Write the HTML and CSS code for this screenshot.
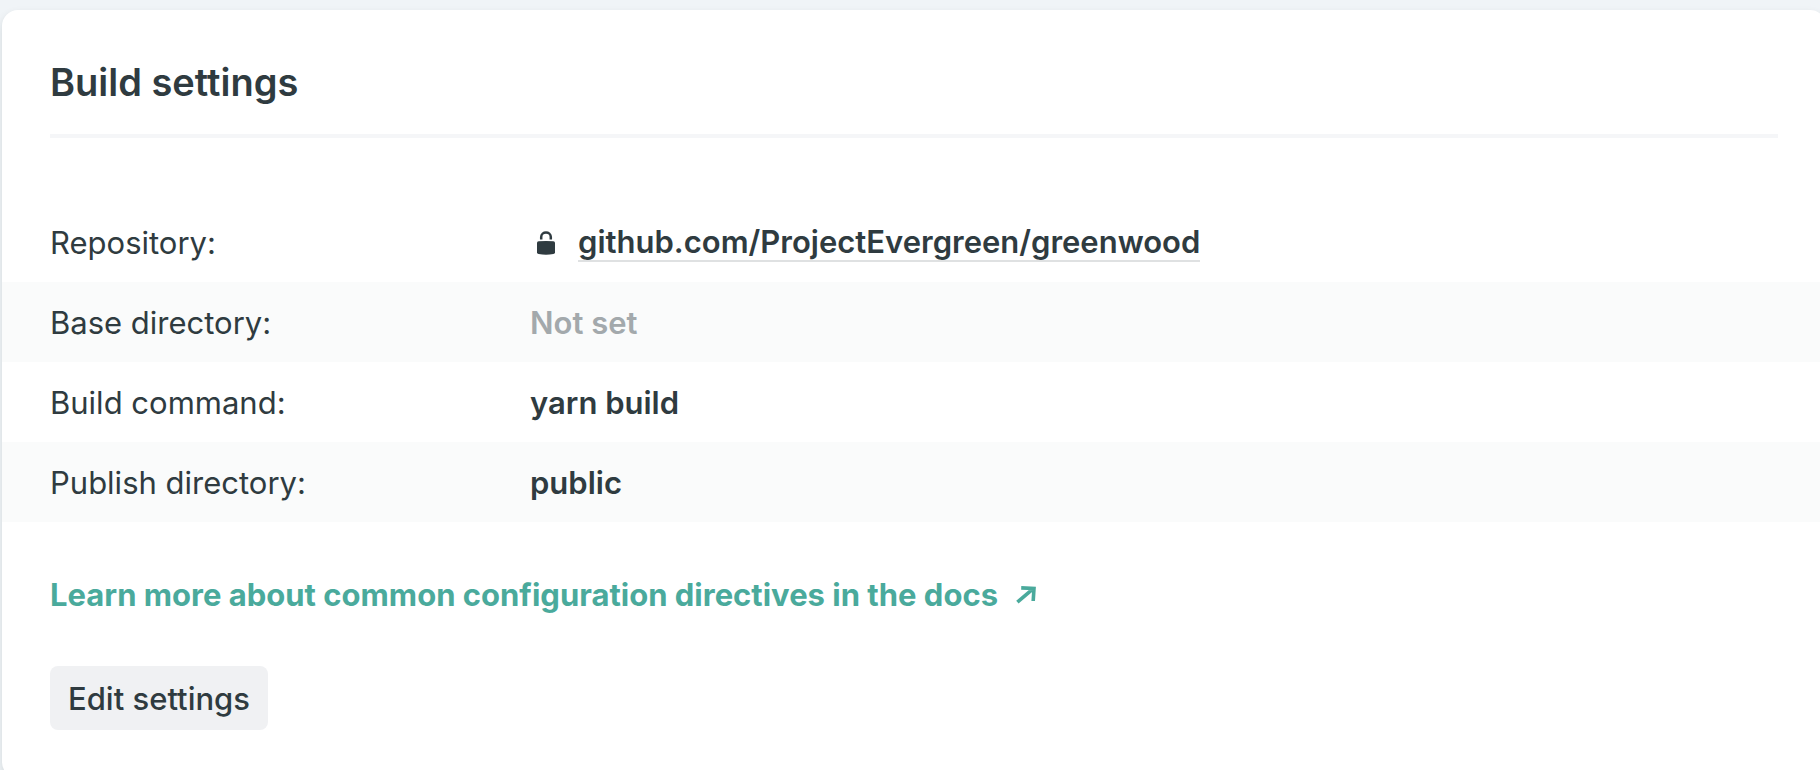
FILE: index.html
```html
<!DOCTYPE html>
<html lang="en">
<head>
<meta charset="utf-8">
<meta name="viewport" content="width=device-width, initial-scale=1">
<title>Build settings</title>
<link rel="stylesheet" href="styles.css">
</head>
<body>
<main class="card">
  <h2 class="card-title">Build settings</h2>
  <dl class="settings">
    <div class="row">
      <dt>Repository:</dt>
      <dd>
        <svg class="lock" viewBox="0 0 20 26" aria-hidden="true"><path d="M5.2 9.5V7C5.2 1 14.8 1 14.8 7v2.5" fill="none" stroke="currentColor" stroke-width="2.5"/><path d="M2.6 11.2Q10 10.6 17.4 11.2 19 11.4 19 12.8V22.2Q19 23.8 17.4 24.1 10 25.4 2.6 24.1 1 23.8 1 22.2V12.8Q1 11.4 2.6 11.2Z" fill="currentColor"/></svg>
        <a class="repo" href="#">github.com/ProjectEvergreen/greenwood</a>
      </dd>
    </div>
    <div class="row"><dt>Base directory:</dt><dd class="unset">Not set</dd></div>
    <div class="row"><dt>Build command:</dt><dd>yarn build</dd></div>
    <div class="row"><dt>Publish directory:</dt><dd>public</dd></div>
  </dl>
  <div class="actions">
    <a class="docs" href="#">Learn more about common configuration directives in the docs
      <svg class="arrow" viewBox="0 0 20 18" aria-hidden="true"><path d="M1.4 16.2 17 2.8M5.2 1.9 18 2.4 17.2 15" fill="none" stroke="currentColor" stroke-width="3.6"/></svg></a>
    <button class="edit" type="button">Edit settings</button>
  </div>
</main>
</body>
</html>
```

FILE: styles.css
```css
* {
  box-sizing: border-box;
}

body {
  margin: 0;
  height: 100vh;
  overflow: hidden;
  background: #f0f4f7;
  color: #2f3b40;
  font-family: Inter, "Liberation Sans", sans-serif;
  font-size: 31px;
  line-height: 48px;
}

.card {
  margin: 10px -6px 0 2px;
  padding: 48px 0;
  border-radius: 16px;
  background: #fff;
  box-shadow: 0 4px 8px rgba(14, 30, 37, 0.12);
}

.card-title {
  margin: 0 48px 64px;
  padding-bottom: 28px;
  border-bottom: 4px solid #f5f6f8;
  font-size: 38px;
  font-weight: 600;
}

.settings {
  margin: 0;
}

.row {
  display: grid;
  grid-template-columns: 480px 1fr;
  padding: 17px 48px 15px;
}

.row:nth-child(even) {
  background: #fafbfb;
}

dd {
  display: flex;
  align-items: center;
  margin: 0;
  font-weight: 600;
}

.unset {
  color: #a3a9ac;
}

.lock {
  width: 20px;
  height: 26px;
  margin: 0 22px 0 6px;
}

.repo {
  color: inherit;
  line-height: 36px;
  text-decoration: none;
  border-bottom: 2px solid #dfe1e2;
}

.actions {
  display: flex;
  flex-direction: column;
  align-items: flex-start;
  gap: 47px;
  padding: 49px 48px 0;
}

.docs {
  display: flex;
  align-items: center;
  gap: 18px;
  color: #4aaa9c;
  font-weight: 700;
  text-decoration: none;
}

.arrow {
  width: 20px;
  height: 18px;
}

.edit {
  padding: 9px 18px 7px;
  border: 0;
  border-radius: 8px;
  background: #f0f1f3;
  color: inherit;
  font: inherit;
  font-weight: 500;
}
```
